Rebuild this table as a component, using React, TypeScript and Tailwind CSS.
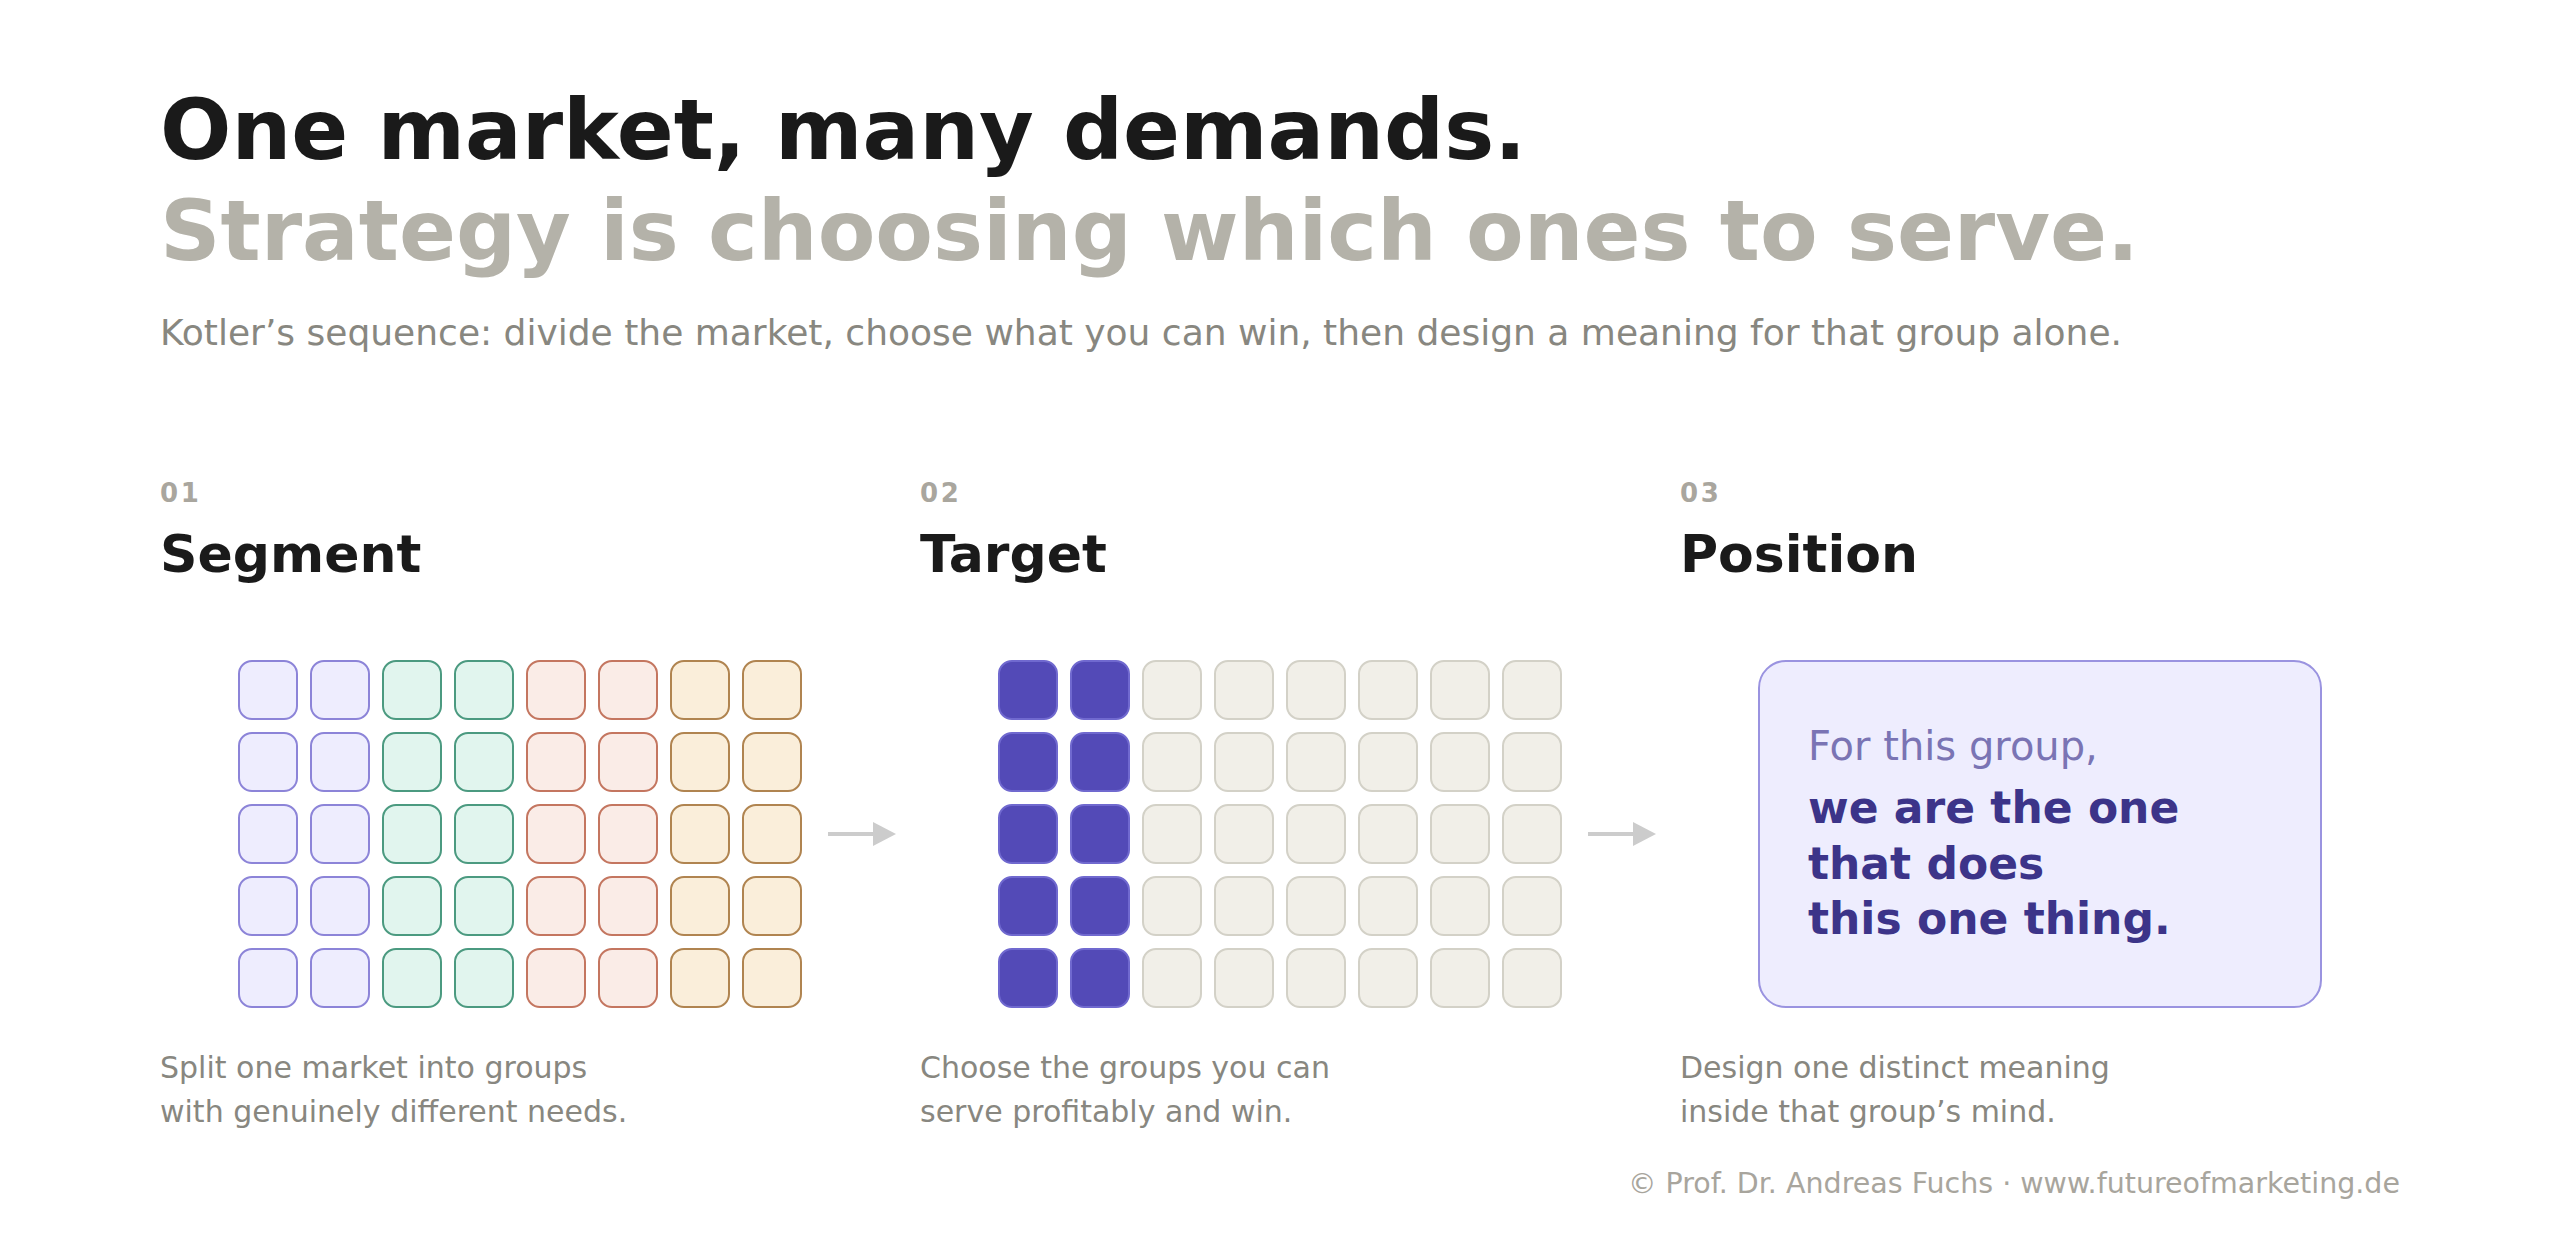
import React from "react";

type Col = {
  num: string;
  title: string;
  desc: [string, string];
  kind: "segment" | "target" | "position";
};

const cols: Col[] = [
  { num: "01", title: "Segment", desc: ["Split one market into groups", "with genuinely different needs."], kind: "segment" },
  { num: "02", title: "Target", desc: ["Choose the groups you can", "serve profitably and win."], kind: "target" },
  { num: "03", title: "Position", desc: ["Design one distinct meaning", "inside that group’s mind."], kind: "position" },
];

const segClasses = [
  "bg-[#EEEDFE] border-[#8c84d8]",
  "bg-[#EEEDFE] border-[#8c84d8]",
  "bg-[#E1F5EE] border-[#4b9a80]",
  "bg-[#E1F5EE] border-[#4b9a80]",
  "bg-[#FAECE7] border-[#c47660]",
  "bg-[#FAECE7] border-[#c47660]",
  "bg-[#FAEEDA] border-[#b08450]",
  "bg-[#FAEEDA] border-[#b08450]",
];

const tgtClasses = [
  "bg-[#534AB7] border-[#7069cf]",
  "bg-[#534AB7] border-[#7069cf]",
  "bg-[#F1EFE8] border-[#D3D1C7]",
  "bg-[#F1EFE8] border-[#D3D1C7]",
  "bg-[#F1EFE8] border-[#D3D1C7]",
  "bg-[#F1EFE8] border-[#D3D1C7]",
  "bg-[#F1EFE8] border-[#D3D1C7]",
  "bg-[#F1EFE8] border-[#D3D1C7]",
];

function Grid({ classes }: { classes: string[] }) {
  const cells = [];
  for (let r = 0; r < 5; r++) {
    for (let c = 0; c < 8; c++) {
      cells.push(
        <div key={`${r}-${c}`} className={`w-[60px] h-[60px] rounded-[14px] border-2 ${classes[c]}`} />
      );
    }
  }
  return <div className="grid grid-cols-8 gap-[12px] shrink-0 w-[564px]">{cells}</div>;
}

function Arrow() {
  return (
    <svg width="68" height="24" viewBox="0 0 68 24" className="shrink-0 ml-[26px]">
      <rect x="0" y="10" width="46" height="4" fill="#cccccc" />
      <polygon points="45,0 68,12 45,24" fill="#cccccc" />
    </svg>
  );
}

function Card() {
  return (
    <div className="w-[564px] h-[348px] shrink-0 rounded-[28px] border-2 border-[#9a93e0] bg-[#EEEDFE] flex flex-col justify-center pl-[48px]">
      <div className="text-[40px] leading-[48px] text-[#7a74b4]">For this group,</div>
      <div className="mt-[10px] text-[44px] leading-[55.5px] font-bold text-[#3C3489]">
        we are the one
        <br />
        that does
        <br />
        this one thing.
      </div>
    </div>
  );
}

export default function App() {
  return (
    <div className="w-[2560px] h-[1256px] bg-white font-['DejaVu_Sans',sans-serif] px-[160px] pt-[80px] flex flex-col overflow-hidden">
      <h1 className="text-[84px] leading-[1.2] font-bold text-[#1a1a1a]">
        One market, many demands.
        <br />
        <span className="text-[#B4B2A9]">Strategy is choosing which ones to serve.</span>
      </h1>
      <p className="mt-[26px] text-[36px] leading-[1.4] text-[#888780]">
        Kotler’s sequence: divide the market, choose what you can win, then design a meaning for that group alone.
      </p>
      <div className="mt-[122px] grid grid-cols-3 gap-x-[40px]">
        {cols.map((c) => (
          <div key={c.num} className="flex flex-col">
            <div className="text-[26px] leading-none font-bold tracking-[0.1em] text-[#a9a69e]">{c.num}</div>
            <h2 className="mt-[17px] text-[52px] leading-[1.2] font-bold text-[#1a1a1a]">{c.title}</h2>
            <div className="mt-[75px] flex items-center pl-[78px]">
              {c.kind === "segment" && (
                <>
                  <Grid classes={segClasses} />
                  <Arrow />
                </>
              )}
              {c.kind === "target" && (
                <>
                  <Grid classes={tgtClasses} />
                  <Arrow />
                </>
              )}
              {c.kind === "position" && <Card />}
            </div>
            <p className="mt-[38px] text-[30px] leading-[44px] text-[#888780]">
              {c.desc[0]}
              <br />
              {c.desc[1]}
            </p>
          </div>
        ))}
      </div>
      <p className="mt-[33px] text-right text-[28.5px] leading-[1.2] text-[#a8a59d]">
        © Prof. Dr. Andreas Fuchs · www.futureofmarketing.de
      </p>
    </div>
  );
}
